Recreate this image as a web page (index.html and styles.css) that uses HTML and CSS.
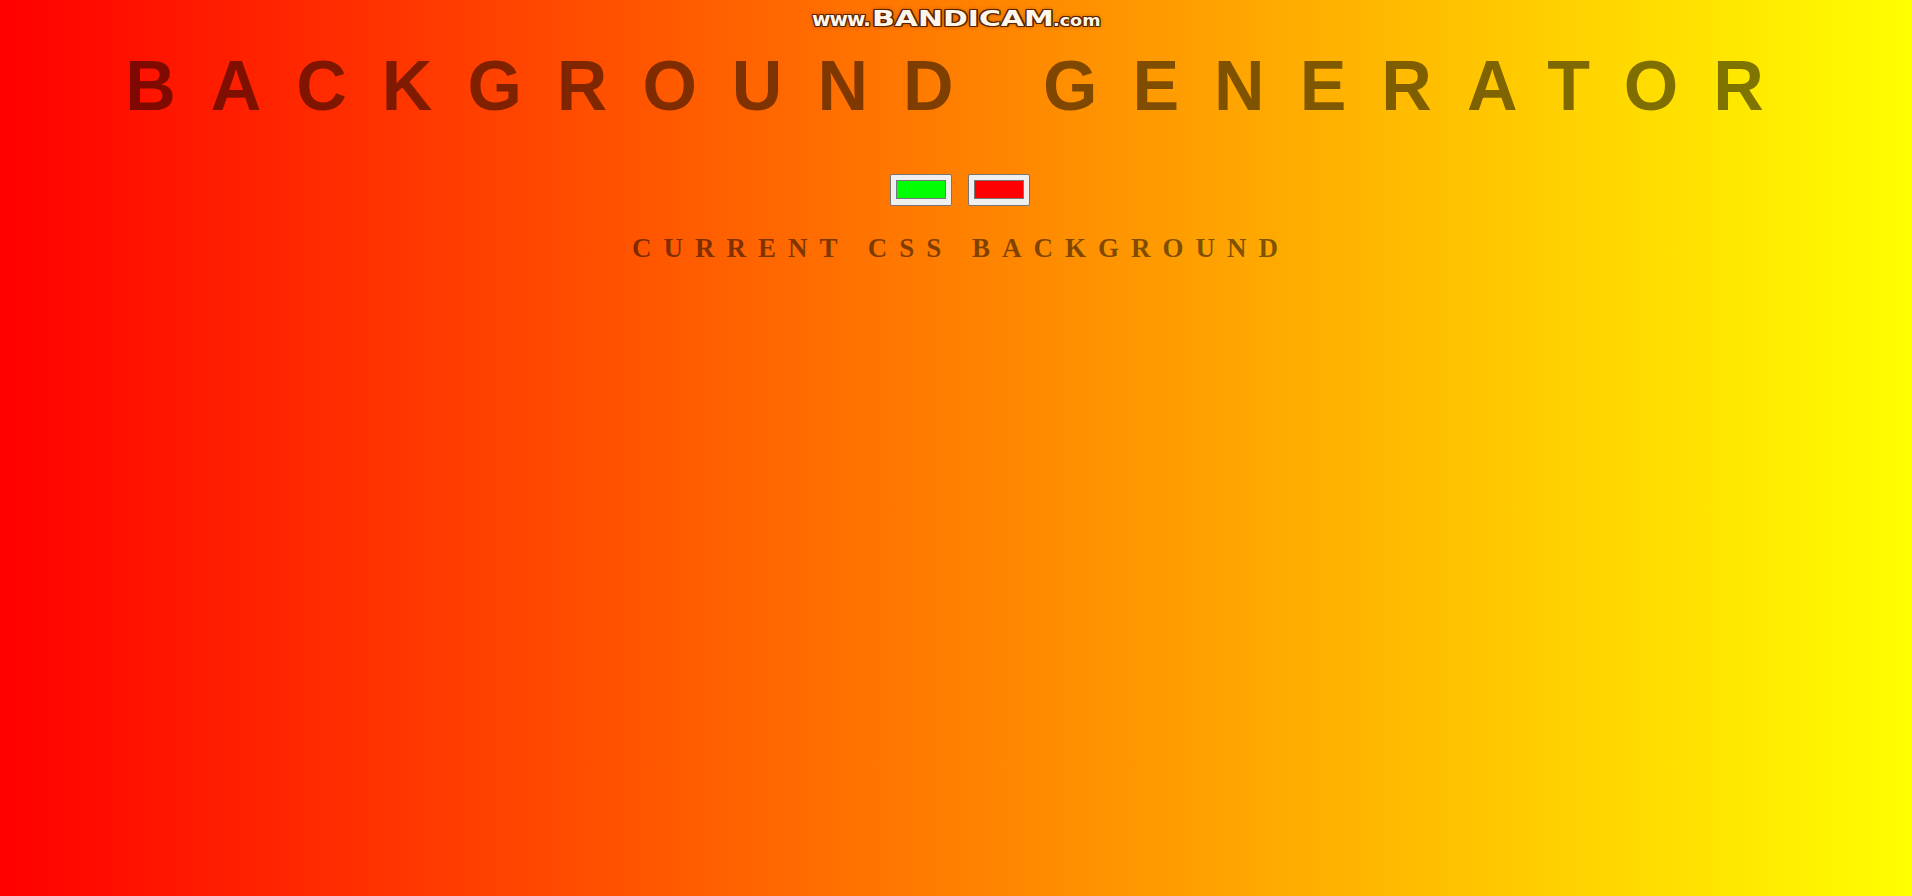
FILE: index.html
```html
<!DOCTYPE html>
<html lang="en">
<head>
<meta charset="utf-8">
<title>Background Generator</title>
<link rel="stylesheet" href="styles.css">
</head>
<body>
  <div class="watermark"><span class="wm-small">www.</span><span class="wm-big">BANDICAM</span><span class="wm-com">.com</span></div>
  <h1 class="title">Background Generator</h1>
  <div class="pickers">
    <input class="picker" type="color" name="color1" value="#00ff00">
    <input class="picker" type="color" name="color2" value="#ff0000">
  </div>
  <h3 class="subtitle">Current CSS Background</h3>
  <h3 class="css-output"></h3>
</body>
</html>
```
FILE: styles.css
```css
html {
  height: 100%;
  background: linear-gradient(to right, #ff0000, #ffff00);
}

body {
  margin: 0;
  padding: 0 10px;
  color: rgba(0, 0, 0, 0.5);
  text-align: center;
  text-transform: uppercase;
  font-family: "Liberation Serif", "Times New Roman", serif;
}

.title {
  margin: 46px 0 48px;
  padding-left: 12px;
  font: 700 70px "Liberation Sans", Arial, sans-serif;
  letter-spacing: 35px;
  color: rgba(0, 0, 0, 0.5);
}

.pickers {
  display: flex;
  justify-content: center;
  gap: 16px;
  padding-left: 8px;
}

.picker {
  -webkit-appearance: none;
  appearance: none;
  box-sizing: border-box;
  width: 62px;
  height: 32px;
  margin: 0;
  padding: 0;
  background: #efefef;
  border: 1px solid #767676;
  border-radius: 2px;
  cursor: pointer;
}

.picker::-webkit-color-swatch-wrapper {
  padding: 5px 5px 6px 5px;
}

.picker::-webkit-color-swatch {
  border: 1px solid #777777;
  border-radius: 0;
}

.subtitle {
  margin: 27px 0 0;
  padding-left: 10px;
  font: 700 27px "Liberation Serif", "Times New Roman", serif;
  letter-spacing: 12px;
  line-height: normal;
}

.css-output {
  margin: 0;
  font: 700 20px "Liberation Serif", serif;
}

.watermark {
  position: absolute;
  top: 8px;
  left: 812px;
  display: flex;
  align-items: baseline;
  font-family: "DejaVu Sans", sans-serif;
  font-weight: 700;
  color: #fff6ea;
  text-transform: none;
  line-height: 1;
  text-shadow:
    1px 0 0 #5a2400, -1px 0 0 #5a2400, 0 1px 0 #5a2400, 0 -1px 0 #5a2400,
    1px 1px 0 #5a2400, -1px -1px 0 #5a2400, 1px -1px 0 #5a2400, -1px 1px 0 #5a2400,
    0 0 4px rgba(90, 36, 0, 0.8);
}

.wm-small {
  font-size: 20px;
  letter-spacing: -1px;
}

.wm-big {
  display: inline-block;
  font-size: 22px;
  transform: scaleX(1.36);
  margin: 0 24px 0 26px;
}

.wm-com {
  display: inline-block;
  font-size: 16px;
  transform: scaleX(1.1);
  transform-origin: left center;
}
```
